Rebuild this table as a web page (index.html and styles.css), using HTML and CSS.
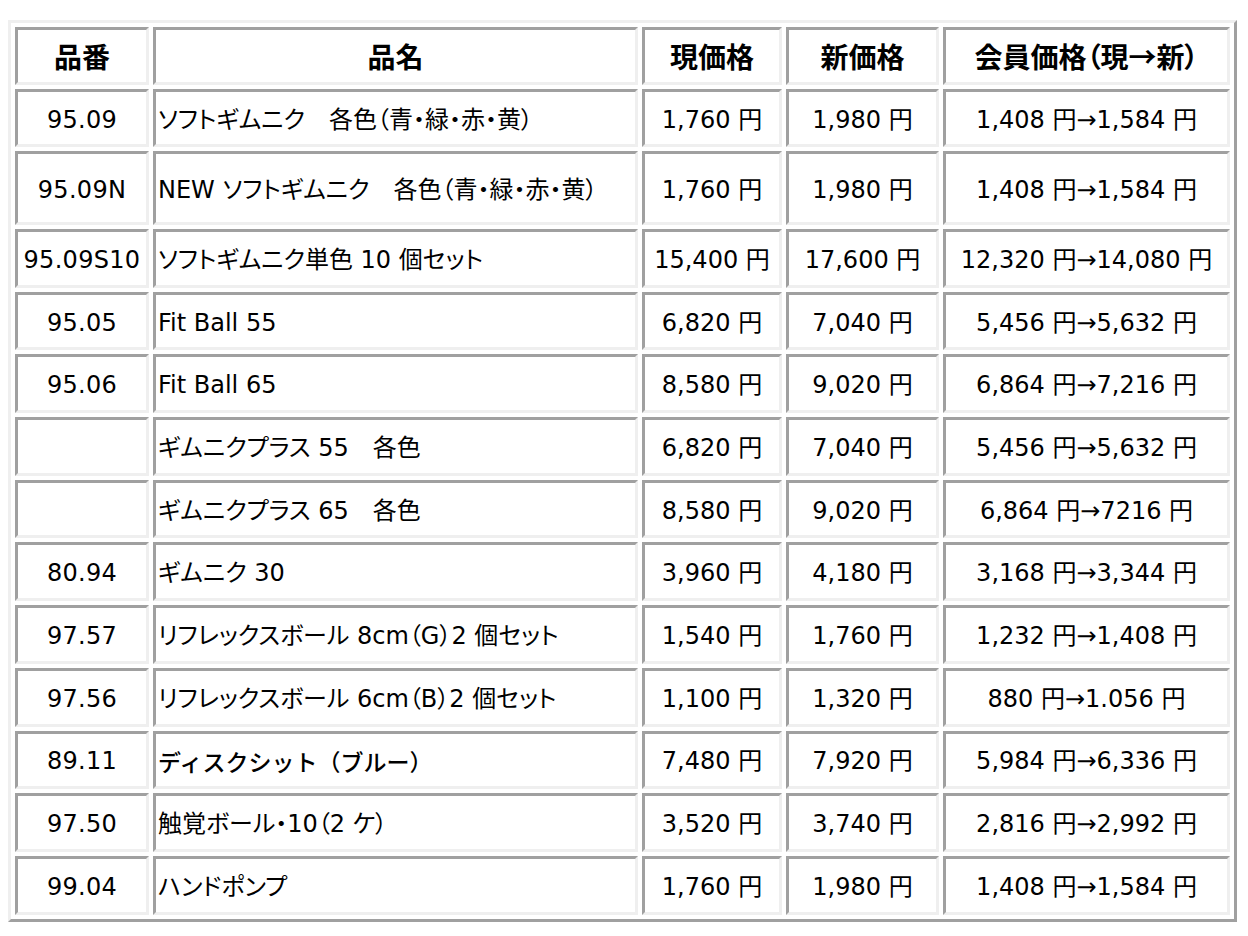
FILE: index.html
```html
<!DOCTYPE html>
<html lang="ja">
<head>
<meta charset="utf-8">
<title>価格表</title>
<link rel="stylesheet" href="styles.css">
</head>
<body>
<table class="price">
  <colgroup>
    <col class="c1"><col class="c2"><col class="c3"><col class="c4"><col class="c5">
  </colgroup>
  <thead>
    <tr class="head">
      <th>品番</th><th>品名</th><th>現価格</th><th>新価格</th><th>会員価格（現→新）</th>
    </tr>
  </thead>
  <tbody>
    <tr class="r1"><td class="no">95.09</td><td class="name">ソフトギムニク　各色（青・緑・赤・黄）</td><td>1,760 円</td><td>1,980 円</td><td>1,408 円→1,584 円</td></tr>
    <tr class="r2"><td class="no">95.09N</td><td class="name">NEW ソフトギムニク　各色（青・緑・赤・黄）</td><td>1,760 円</td><td>1,980 円</td><td>1,408 円→1,584 円</td></tr>
    <tr><td class="no">95.09S10</td><td class="name">ソフトギムニク単色 10 個セット</td><td>15,400 円</td><td>17,600 円</td><td>12,320 円→14,080 円</td></tr>
    <tr><td class="no">95.05</td><td class="name">Fit Ball 55</td><td>6,820 円</td><td>7,040 円</td><td>5,456 円→5,632 円</td></tr>
    <tr><td class="no">95.06</td><td class="name">Fit Ball 65</td><td>8,580 円</td><td>9,020 円</td><td>6,864 円→7,216 円</td></tr>
    <tr><td class="no"></td><td class="name">ギムニクプラス 55　各色</td><td>6,820 円</td><td>7,040 円</td><td>5,456 円→5,632 円</td></tr>
    <tr><td class="no"></td><td class="name">ギムニクプラス 65　各色</td><td>8,580 円</td><td>9,020 円</td><td>6,864 円→7216 円</td></tr>
    <tr><td class="no">80.94</td><td class="name">ギムニク 30</td><td>3,960 円</td><td>4,180 円</td><td>3,168 円→3,344 円</td></tr>
    <tr><td class="no">97.57</td><td class="name">リフレックスボール 8cm（G）2 個セット</td><td>1,540 円</td><td>1,760 円</td><td>1,232 円→1,408 円</td></tr>
    <tr><td class="no">97.56</td><td class="name">リフレックスボール 6cm（B）2 個セット</td><td>1,100 円</td><td>1,320 円</td><td>880 円→1.056 円</td></tr>
    <tr><td class="no">89.11</td><td class="name big">ディスクシット（ブルー）</td><td>7,480 円</td><td>7,920 円</td><td>5,984 円→6,336 円</td></tr>
    <tr><td class="no">97.50</td><td class="name">触覚ボール・10（2 ケ）</td><td>3,520 円</td><td>3,740 円</td><td>2,816 円→2,992 円</td></tr>
    <tr><td class="no">99.04</td><td class="name">ハンドポンプ</td><td>1,760 円</td><td>1,980 円</td><td>1,408 円→1,584 円</td></tr>
  </tbody>
</table>
</body>
</html>
```

FILE: styles.css
```css
html, body {
  background: #ffffff;
}
body {
  margin: 8px;
  color: #000000;
  font-family: "DejaVu Sans", "Noto Sans CJK JP", sans-serif;
  font-size: 24px;
  font-feature-settings: "palt";
}
.price {
  margin-top: 12px;
  width: 1229px;
  table-layout: fixed;
  border-collapse: separate;
  border-spacing: 4px;
  border-style: solid;
  border-width: 3px;
  border-color: #efefef #a0a0a0 #a0a0a0 #efefef;
  background: #ffffff;
}
.c1 { width: 134px; }
.c2 { width: 485px; }
.c3 { width: 140px; }
.c4 { width: 153px; }
.c5 { width: 287px; }
.price th,
.price td {
  box-sizing: border-box;
  border-style: solid;
  border-width: 3px;
  border-color: #a0a0a0 #efefef #efefef #a0a0a0;
  padding: 4px 2px 0 2px;
  text-align: center;
  vertical-align: middle;
  white-space: nowrap;
  height: 58.7px;
  line-height: 1.2;
}
.price td.no {
  letter-spacing: 0.3px;
}
.price th {
  font-family: "Noto Sans CJK JP", sans-serif;
  font-weight: 700;
  font-size: 28px;
  height: 58px;
  padding-top: 2px;
}
.price .r1 td { height: 58px; }
.price .r2 td { height: 74px; }
.price td.name {
  text-align: left;
  letter-spacing: 0;
}
.price td.big {
  font-family: "Noto Sans CJK JP", sans-serif;
  font-feature-settings: normal;
  font-size: 23px;
  font-weight: 500;
}
```
